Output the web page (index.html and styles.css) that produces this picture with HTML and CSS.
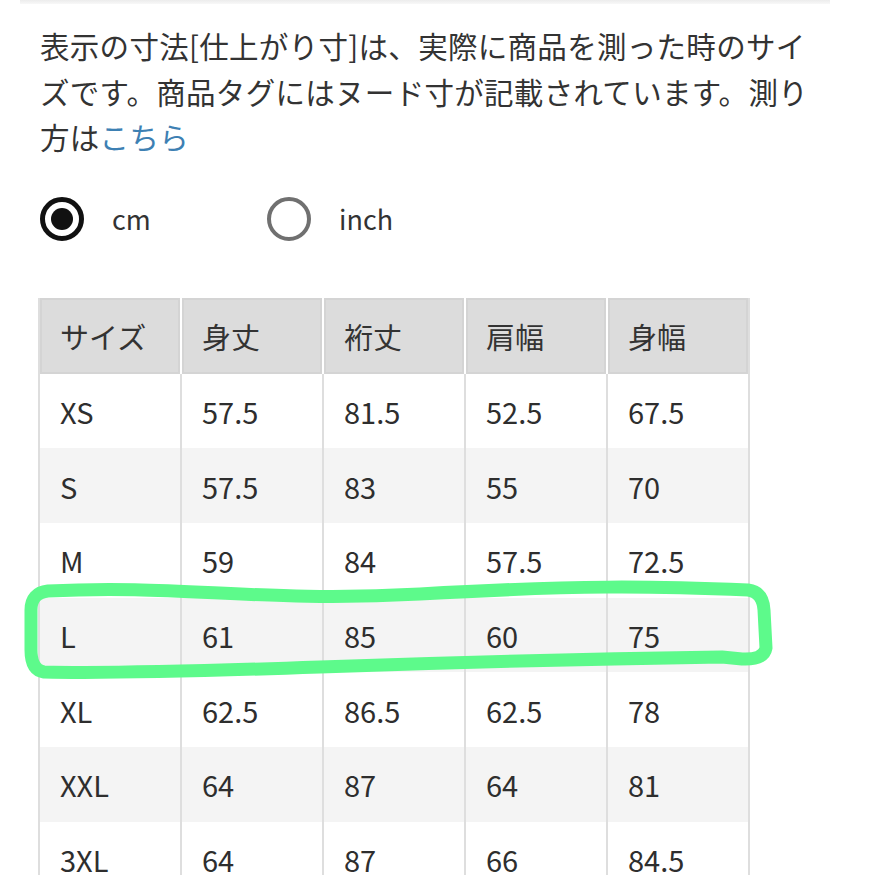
FILE: index.html
```html
<!DOCTYPE html>
<html lang="ja">
<head>
<meta charset="utf-8">
<link rel="stylesheet" href="styles.css">
</head>
<body>
<div class="page">
  <div class="topbar"></div>
  <p class="note">表示の寸法[仕上がり寸]は、実際に商品を測った時のサイズです。商品タグにはヌード寸が記載されています。測り方は<a class="link" href="#">こちら</a></p>
  <div class="units">
    <label class="unit"><span class="radio radio-on"></span><span class="unit-label">cm</span></label>
    <label class="unit"><span class="radio radio-off"></span><span class="unit-label">inch</span></label>
  </div>
  <div class="table-wrap">
    <table class="sizes">
      <thead>
        <tr><th>サイズ</th><th>身丈</th><th>裄丈</th><th>肩幅</th><th>身幅</th></tr>
      </thead>
      <tbody>
        <tr><td>XS</td><td>57.5</td><td>81.5</td><td>52.5</td><td>67.5</td></tr>
        <tr><td>S</td><td>57.5</td><td>83</td><td>55</td><td>70</td></tr>
        <tr><td>M</td><td>59</td><td>84</td><td>57.5</td><td>72.5</td></tr>
        <tr><td>L</td><td>61</td><td>85</td><td>60</td><td>75</td></tr>
        <tr><td>XL</td><td>62.5</td><td>86.5</td><td>62.5</td><td>78</td></tr>
        <tr><td>XXL</td><td>64</td><td>87</td><td>64</td><td>81</td></tr>
        <tr><td>3XL</td><td>64</td><td>87</td><td>66</td><td>84.5</td></tr>
      </tbody>
    </table>
    <svg class="marker" width="875" height="120" viewBox="0 560 875 120">
      <path d="M 48 591 C 180 584, 260 603, 420 594 S 650 586, 748 590 Q 763 592 764 610 L 766 648 Q 764 660 742 659 L 722 657 Q 520 660, 320 667 T 44 672 Q 31 670 31 650 L 31 610 Q 31 593 48 591 Z" fill="none" stroke="#5dfa8b" stroke-width="13" stroke-linecap="round" stroke-linejoin="round"/>
    </svg>
  </div>
</div>
</body>
</html>
```

FILE: styles.css
```css
html, body {
  margin: 0;
  padding: 0;
  background: #ffffff;
}

body {
  font-family: "Noto Sans CJK JP", "Noto Sans", sans-serif;
  color: #333333;
  overflow: hidden;
}

.page {
  position: relative;
  width: 875px;
  height: 875px;
  overflow: hidden;
}

.topbar {
  height: 4px;
  margin: 0 45px 0 20px;
  background: linear-gradient(#ececec, #f8f8f8);
}

.note {
  margin: 0;
  padding: 19px 50px 0 40px;
  font-size: 29.5px;
  line-height: 45.5px;
  letter-spacing: 0.3px;
  color: #333333;
}

.link {
  color: #3d80b3;
  text-decoration: none;
}

.units {
  display: flex;
  align-items: center;
  margin: 37px 0 0 40px;
  height: 44px;
}

.unit {
  display: flex;
  align-items: center;
  width: 227px;
}

.radio {
  box-sizing: border-box;
  width: 44px;
  height: 44px;
  border-radius: 50%;
  position: relative;
  flex: none;
}

.radio-on {
  border: 5px solid #111111;
}

.radio-on::after {
  content: "";
  position: absolute;
  left: 6px;
  top: 6px;
  width: 22px;
  height: 22px;
  border-radius: 50%;
  background: #111111;
}

.radio-off {
  border: 4px solid #707070;
}

.unit-label {
  margin-left: 28px;
  font-size: 27px;
  color: #333333;
}

.table-wrap {
  margin: 57px 0 0 38px;
}

.sizes {
  border-collapse: collapse;
  table-layout: fixed;
  width: 712px;
  border-left: 2px solid #dedede;
  border-right: 2px solid #dedede;
}

.sizes th,
.sizes td {
  text-align: left;
  padding: 0 0 0 20px;
  vertical-align: middle;
  box-sizing: border-box;
}

.sizes th {
  height: 76px;
  background: #dcdcdc;
  font-weight: 400;
  font-size: 29px;
  color: #333333;
  border-left: 2px solid #ffffff;
  box-shadow: inset 0 0 0 2px #d4d4d4;
}

.sizes th:first-child {
  border-left: 0;
}

.sizes td {
  height: 74.7px;
  font-size: 29px;
  color: #2e2e2e;
  border-left: 2px solid #dedede;
}

.sizes td:first-child {
  border-left: 0;
}

.sizes tbody tr:nth-child(even) td {
  background: #f4f4f4;
}

.marker {
  position: absolute;
  left: 0;
  top: 560px;
  pointer-events: none;
}
```
